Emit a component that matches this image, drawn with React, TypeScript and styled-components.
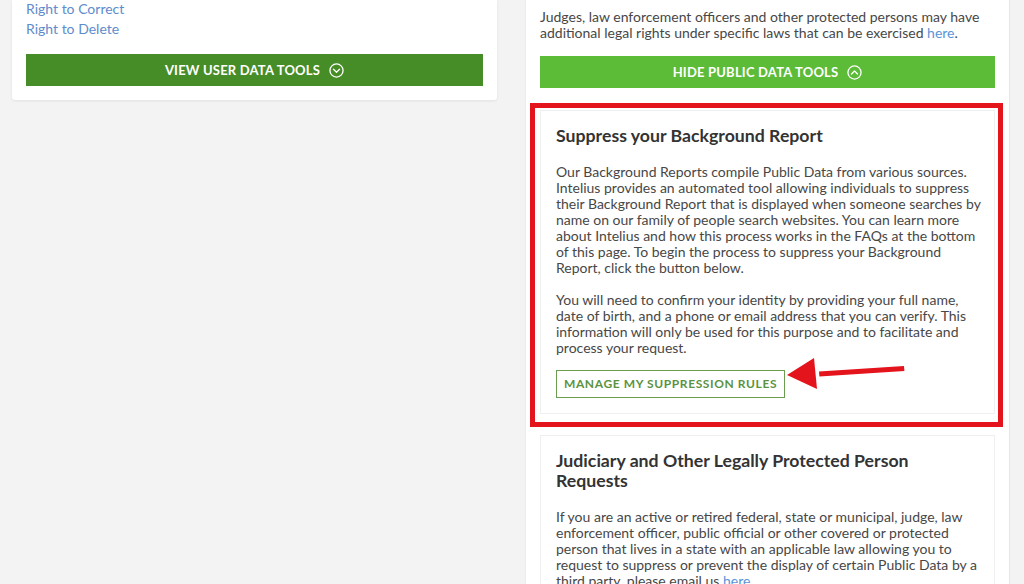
import React from 'react'
import styled, { createGlobalStyle } from 'styled-components'

const GlobalStyle = createGlobalStyle`
  html, body {
    margin: 0;
    padding: 0;
    background: #f3f3f3;
    font-family: Lato, 'Open Sans', Arial, sans-serif;
    color: #474747;
    overflow: hidden;
  }
`

interface ToolButtonProps {
  readonly $tone: 'dark' | 'light'
}

const CircleChevron: React.FC<{ up?: boolean }> = ({ up }) => (
  <svg width='15' height='15' viewBox='0 0 16 16' fill='none'>
    <circle cx='8' cy='8' r='7' stroke='#fff' strokeWidth='1.4' />
    <path
      d={up ? 'M4.8 9.6 L8 6.4 L11.2 9.6' : 'M4.8 6.6 L8 9.8 L11.2 6.6'}
      stroke='#fff'
      strokeWidth='1.4'
      strokeLinecap='round'
      strokeLinejoin='round'
    />
  </svg>
)

const App: React.FC = () => {
  return (
    <>
      <GlobalStyle />
      <StyledPage>
        <StyledCard>
          <StyledLinkList>
            <StyledLink>Right to Correct</StyledLink>
            <StyledLink>Right to Delete</StyledLink>
          </StyledLinkList>
          <StyledToolButton $tone='dark'>
            View User Data Tools
            <CircleChevron />
          </StyledToolButton>
        </StyledCard>

        <StyledRightCard>
          <StyledIntro>
            Judges, law enforcement officers and other protected persons may
            have additional legal rights under specific laws that can be
            exercised <StyledInlineLink>here</StyledInlineLink>.
          </StyledIntro>
          <StyledToolButton $tone='light'>
            Hide Public Data Tools
            <CircleChevron up />
          </StyledToolButton>

          <StyledSection>
            <StyledHighlight />
            <StyledHeading>Suppress your Background Report</StyledHeading>
            <StyledParagraph>
              Our Background Reports compile Public Data from various sources.
              Intelius provides an automated tool allowing individuals to
              suppress their Background Report that is displayed when someone
              searches by name on our family of people search websites. You can
              learn more about Intelius and how this process works in the FAQs
              at the bottom of this page. To begin the process to suppress your
              Background Report, click the button below.
            </StyledParagraph>
            <StyledParagraph>
              You will need to confirm your identity by providing your full
              name, date of birth, and a phone or email address that you can
              verify. This information will only be used for this purpose and
              to facilitate and process your request.
            </StyledParagraph>
            <StyledOutlineButton>Manage My Suppression Rules</StyledOutlineButton>
            <StyledArrow width='130' height='40' viewBox='0 0 130 40'>
              <path d='M34 17.5 L119 12 L119.4 17 L34.4 22.5 Z' fill='#e3141c' />
              <path d='M2 21 L29 4 L32 35 Z' fill='#e3141c' />
            </StyledArrow>
          </StyledSection>

          <StyledSection>
            <StyledHeading>
              Judiciary and Other Legally Protected Person Requests
            </StyledHeading>
            <StyledParagraph>
              If you are an active or retired federal, state or municipal,
              judge, law enforcement officer, public official or other covered
              or protected person that lives in a state with an applicable law
              allowing you to request to suppress or prevent the display of
              certain Public Data by a third party, please email us{' '}
              <StyledInlineLink>here</StyledInlineLink>.
            </StyledParagraph>
          </StyledSection>
        </StyledRightCard>
      </StyledPage>
    </>
  )
}

const StyledPage = styled.div`
  display: flex;
  align-items: flex-start;
  gap: 28px;
  padding: 0 14px 0 12px;
  height: 584px;
  box-sizing: border-box;
`

const StyledCard = styled.div`
  width: 485px;
  box-sizing: border-box;
  background: #fff;
  padding: 0 14px 14px;
  box-shadow: 0 1px 3px rgba(0, 0, 0, 0.08);
  border-radius: 0 0 3px 3px;
`

const StyledRightCard = styled.div`
  width: 485px;
  height: 100%;
  box-sizing: border-box;
  background: #fff;
  padding: 9px 14px 0;
  border-right: 1px solid #e6e6e6;
  border-left: 1px solid #ececec;
`

const StyledLinkList = styled.div`
  display: flex;
  flex-direction: column;
  margin: -1px 0 3px;
`

const StyledLink = styled.a`
  font-size: 14px;
  line-height: 20px;
  color: #5e8ccc;
`

const StyledInlineLink = styled.a`
  color: #5b94d6;
`

const StyledToolButton = styled.div<ToolButtonProps>`
  display: flex;
  align-items: center;
  justify-content: center;
  gap: 9px;
  height: 32px;
  margin-top: 15px;
  background: ${(props) => (props.$tone === 'dark' ? '#478d27' : '#5cbb37')};
  color: #fff;
  font-size: 13px;
  font-weight: 700;
  letter-spacing: 0.2px;
  text-transform: uppercase;
  cursor: pointer;
`

const StyledIntro = styled.p`
  margin: 0;
  font-size: 14px;
  line-height: 16px;
`

const StyledSection = styled.div`
  position: relative;
  margin-top: 22px;
  border: 1px solid #efefef;
  padding: 15px 13px 15px 15px;
  & + & {
    margin-top: 21px;
    border-bottom: none;
  }
`

const StyledHighlight = styled.div`
  position: absolute;
  left: -11px;
  top: -8px;
  right: -9px;
  bottom: -14px;
  border: 5px solid #e3141c;
  pointer-events: none;
`

const StyledHeading = styled.h3`
  margin: 0 0 18px;
  font-size: 17.7px;
  line-height: 20px;
  font-weight: 700;
  color: #333;
`

const StyledParagraph = styled.p`
  margin: 0 0 16px;
  font-size: 14px;
  line-height: 16px;
  color: #474747;
`

const StyledOutlineButton = styled.div`
  display: inline-block;
  margin-top: -3px;
  padding: 0 7px;
  height: 26px;
  line-height: 26px;
  border: 1px solid #6c9c4f;
  color: #5b9340;
  font-size: 12px;
  font-weight: 700;
  letter-spacing: 0.6px;
  text-transform: uppercase;
`

const StyledArrow = styled.svg`
  position: absolute;
  left: 244px;
  top: 243px;
`

export default App
